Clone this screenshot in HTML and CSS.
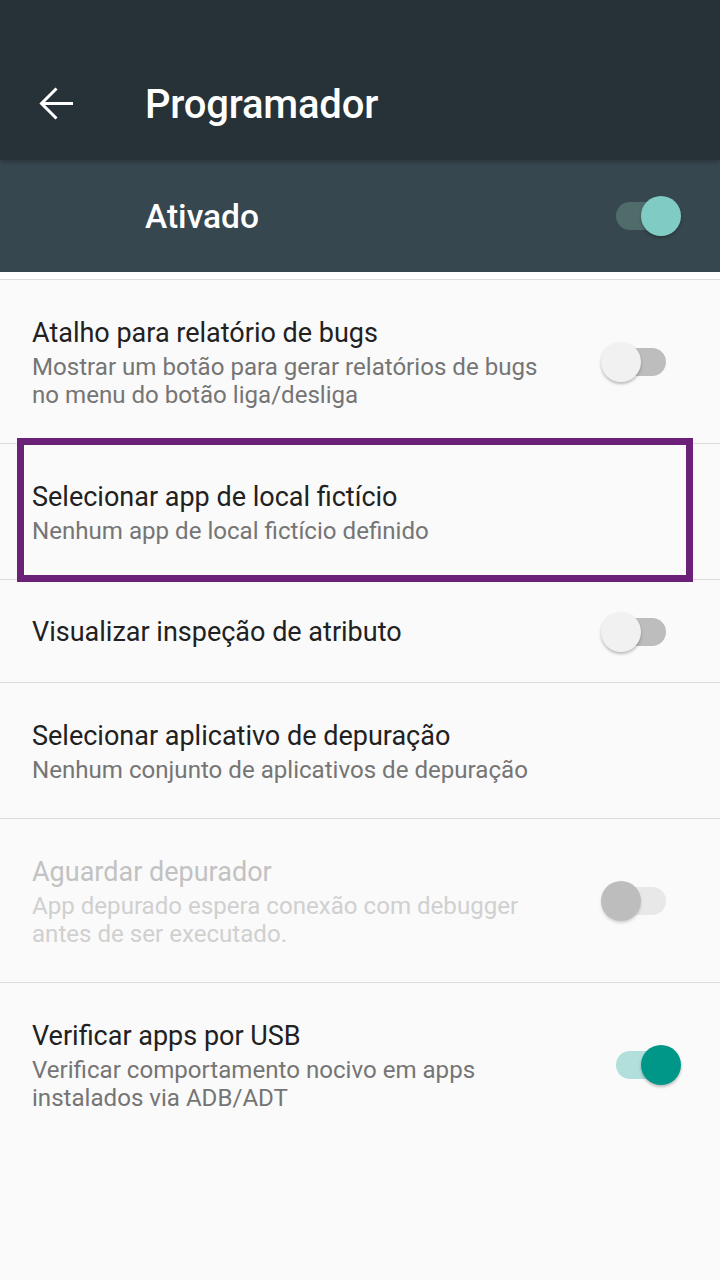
FILE: index.html
```html
<!DOCTYPE html>
<html lang="pt">
<head>
<meta charset="utf-8">
<title>Programador</title>
<link rel="stylesheet" href="styles.css">
</head>
<body>
<header class="appbar">
  <div class="toolbar">
    <svg class="back" width="48" height="48" viewBox="0 0 48 48" aria-hidden="true">
      <path d="M41 24.5H10.5" stroke="#fff" stroke-width="3" fill="none"/>
      <path d="M24.5 9.5L9.5 24.5L24.5 39.5" stroke="#fff" stroke-width="3" fill="none"/>
    </svg>
    <h1 class="title">Programador</h1>
  </div>
  <div class="switchbar">
    <span class="switchbar-label">Ativado</span>
    <span class="switch switch-header on"><span class="track"></span><span class="thumb"></span></span>
  </div>
</header>
<div class="gap"></div>
<main class="list">
  <div class="row two">
    <div class="text">
      <div class="row-title">Atalho para relatório de bugs</div>
      <div class="row-summary">Mostrar um botão para gerar relatórios de bugs<br>no menu do botão liga/desliga</div>
    </div>
    <span class="switch off"><span class="track"></span><span class="thumb"></span></span>
  </div>
  <div class="row highlighted">
    <div class="text">
      <div class="row-title">Selecionar app de local fictício</div>
      <div class="row-summary">Nenhum app de local fictício definido</div>
    </div>
    <div class="highlight-box"></div>
  </div>
  <div class="row single">
    <div class="text">
      <div class="row-title">Visualizar inspeção de atributo</div>
    </div>
    <span class="switch off"><span class="track"></span><span class="thumb"></span></span>
  </div>
  <div class="row">
    <div class="text">
      <div class="row-title">Selecionar aplicativo de depuração</div>
      <div class="row-summary">Nenhum conjunto de aplicativos de depuração</div>
    </div>
  </div>
  <div class="row two disabled">
    <div class="text">
      <div class="row-title">Aguardar depurador</div>
      <div class="row-summary">App depurado espera conexão com debugger<br>antes de ser executado.</div>
    </div>
    <span class="switch dis"><span class="track"></span><span class="thumb"></span></span>
  </div>
  <div class="row two last">
    <div class="text">
      <div class="row-title">Verificar apps por USB</div>
      <div class="row-summary">Verificar comportamento nocivo em apps<br>instalados via ADB/ADT</div>
    </div>
    <span class="switch on"><span class="track"></span><span class="thumb"></span></span>
  </div>
</main>
</body>
</html>
```
FILE: styles.css
```css
* { box-sizing: border-box; }
html, body {
  margin: 0;
  padding: 0;
}
body {
  width: 720px;
  height: 1280px;
  overflow: hidden;
  background: #fafafa;
  font-family: Roboto, "Noto Sans", "Liberation Sans", sans-serif;
}

.appbar { display: flex; flex-direction: column; }

.toolbar {
  height: 160px;
  padding-top: 50px;
  background: #263238;
  display: flex;
  align-items: center;
  position: relative;
  z-index: 1;
  box-shadow: 0 2px 4px rgba(0,0,0,0.25);
}
.back {
  margin-left: 32px;
  margin-top: -4px;
  flex: none;
}
.title {
  margin: 0 0 0 65px;
  color: #fff;
  font-size: 40px;
  font-weight: 500;
  line-height: 48px;
  letter-spacing: -0.2px;
}

.switchbar {
  height: 112px;
  background: #37474f;
  display: flex;
  align-items: center;
  justify-content: space-between;
  padding-left: 145px;
  padding-right: 39px;
}
.switchbar-label {
  color: #fff;
  font-size: 33.5px;
  font-weight: 500;
}

.gap {
  height: 8px;
  background: #ffffff;
  border-bottom: 1px solid #dcdcdc;
}

.row {
  display: flex;
  align-items: center;
  padding: 35px 39px 34px 32px;
  border-bottom: 1px solid #dcdcdc;
  position: relative;
}
.row.single { padding-top: 34px; padding-bottom: 32px; }
.row.last { border-bottom: none; }

.text { flex: 1; min-width: 0; }
.row-title {
  font-size: 27px;
  line-height: 36px;
  color: #212121;
}
.row-summary {
  margin-top: 2px;
  font-size: 24.1px;
  line-height: 28px;
  color: #757575;
}
.disabled .row-title { color: #c2c2c2; }
.disabled .row-summary { color: #d0d0d0; }

.highlight-box {
  position: absolute;
  left: 17px;
  right: 27px;
  top: -6px;
  bottom: -3px;
  border: 7px solid #6b2177;
  pointer-events: none;
}

/* switches */
.switch {
  position: relative;
  width: 80px;
  height: 40px;
  margin: -4px 0;
  flex: none;
}
.switch .track {
  position: absolute;
  left: 15px;
  top: 6px;
  width: 50px;
  height: 28px;
  border-radius: 14px;
}
.switch .thumb {
  position: absolute;
  top: 0;
  width: 40px;
  height: 40px;
  border-radius: 50%;
  box-shadow: 0 2px 3px rgba(0,0,0,0.25);
}
.switch.off .track { background: #bdbdbd; }
.switch.off .thumb { left: 0; background: #f1f1f1; }
.switch.dis .track { background: #e8e8e8; }
.switch.dis .thumb { left: 0; background: #bdbdbd; box-shadow: 0 2px 3px rgba(0,0,0,0.15); }
.switch.on .track { background: #b2dfdb; }
.switch.on .thumb { left: 40px; background: #009688; }
.switch-header.on .track { background: #4f6b6a; }
.switch-header.on .thumb { background: #80cbc4; }
```
